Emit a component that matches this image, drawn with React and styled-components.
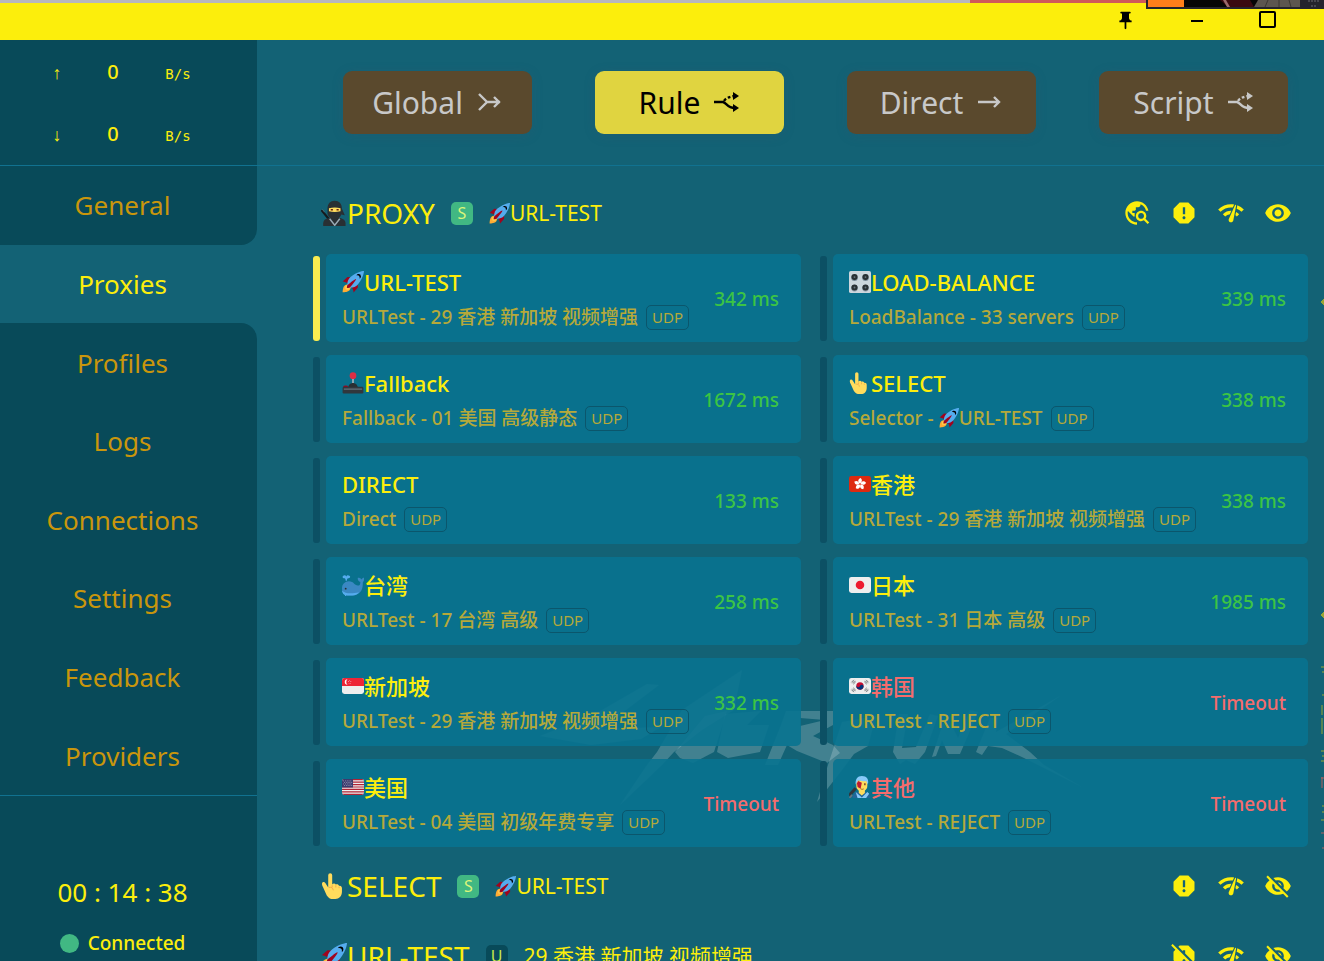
import React from 'react';
import styled, { createGlobalStyle, css } from 'styled-components';
import {
  MdTravelExplore, MdReport, MdReportOff, MdNetworkCheck,
  MdVisibility, MdVisibilityOff, MdPushPin,
} from 'react-icons/md';

const c = {
  yellow: '#fcee0c',
  deep: '#084a59',
  base: '#136275',
  line: '#117290',
  nav: '#c9960c',
  sub: '#b5a93a',
  good: '#3cc444',
  bad: '#f56c6c',
};

const GlobalStyle = createGlobalStyle`
  * { box-sizing: border-box; }
  body {
    margin: 0;
    background: ${c.base};
    color: ${c.yellow};
    font-family: "Noto Sans", "Noto Sans CJK SC", sans-serif;
    overflow: hidden;
  }
  button { font: inherit; color: inherit; border: 0; background: none; padding: 0; cursor: pointer; }
  a { color: inherit; text-decoration: none; }
  h2, p { margin: 0; font-weight: 400; }
`;

const Window = styled.div`
  height: 100vh;
  display: flex;
  flex-direction: column;
`;
const TitleBar = styled.header`
  position: relative;
  flex: none;
  height: 40px;
  padding: 0 21px 0 0;
  border-top: 3px solid #b7b7bd;
  background: ${c.yellow};
  color: #000;
  display: flex;
  justify-content: flex-end;
`;
const WindowButton = styled.button`
  width: 71px;
  height: 34px;
  display: flex;
  align-items: center;
  justify-content: center;
`;
const Backdrop = styled.svg`
  position: absolute;
  top: -3px;
  right: 0;
  display: block;
`;
const Body = styled.div`
  flex: 1;
  min-height: 0;
  display: flex;
`;

const Sidebar = styled.aside`
  flex: none;
  width: 257px;
  display: flex;
  flex-direction: column;
`;
const Traffic = styled.div`
  flex: none;
  height: 126px;
  background: ${c.deep};
  border-bottom: 1px solid ${c.line};
  padding-left: 29px;
  display: grid;
  grid-template-rows: 1fr 1fr;
`;
const TrafficRow = styled.div`
  display: grid;
  grid-template-columns: 56px 56px 74px;
  align-items: baseline;
  align-content: center;
  text-align: center;
  font: 14px "DejaVu Sans Mono", monospace;
`;
const Arrow = styled.span`
  font: 18px "Liberation Mono", monospace;
`;
const Speed = styled.span`
  font: 500 20px "Noto Sans", sans-serif;
`;
const Nav = styled.nav`
  flex: 1;
  display: flex;
  flex-direction: column;
`;
const NavLink = styled.a`
  flex: 1;
  display: flex;
  align-items: center;
  justify-content: center;
  padding-right: 12px;
  font-size: 26px;
  color: ${(p) => (p.$active ? c.yellow : c.nav)};
  background: ${(p) => (p.$active ? 'transparent' : c.deep)};
  border-radius: ${(p) => (p.$edge === 'above' ? '0 0 16px 0' : p.$edge === 'below' ? '0 16px 0 0' : '0')};
`;
const Status = styled.div`
  flex: none;
  height: 166px;
  background: ${c.deep};
  border-top: 1px solid ${c.line};
  padding: 0 12px 4px 0;
  display: flex;
  flex-direction: column;
  align-items: center;
  justify-content: flex-end;
  gap: 19px;
`;
const Timer = styled.p`
  font-size: 26px;
  line-height: 36px;
`;
const Connection = styled.p`
  display: flex;
  align-items: center;
  gap: 9px;
  font-size: 19px;
  font-weight: 500;
  line-height: 28px;
  &::before {
    content: "";
    width: 19px;
    height: 19px;
    border-radius: 50%;
    background: #41b883;
  }
`;

const Main = styled.main`
  position: relative;
  flex: 1;
  min-width: 0;
  overflow: hidden;
`;
const Watermark = styled.svg`
  position: absolute;
  left: 283px;
  top: 630px;
  fill: rgba(255, 255, 255, 0.2);
`;
const EdgeMarks = styled.svg`
  position: absolute;
  right: 0;
  top: 250px;
`;
const Modes = styled.div`
  height: 126px;
  padding: 0 36px 0 86px;
  border-bottom: 1px solid ${c.line};
  display: grid;
  grid-template-columns: repeat(4, 1fr);
  gap: 63px;
  align-items: center;
`;
const ModeButton = styled.button`
  height: 63px;
  border-radius: 9px;
  display: flex;
  align-items: center;
  justify-content: center;
  gap: 14px;
  font-size: 30px;
  line-height: 40px;
  box-shadow: 0 2px 12px rgba(60, 80, 110, 0.2);
  ${(p) => (p.$active
    ? css`background: #e0d440; color: #000;`
    : css`background: #5a492d; color: #c8c8c8;`)}
`;
const List = styled.div`
  position: relative;
  padding: 13px 16px 0 56px;
`;
const GroupHeader = styled.div`
  height: 70px;
  padding: 0 16px 2px 8px;
  display: flex;
  align-items: center;
  gap: 16px;
`;
const GroupName = styled.h2`
  display: flex;
  align-items: center;
  font-size: 28px;
  line-height: 36px;
`;
const Badge = styled.span`
  min-width: 22px;
  height: 23px;
  padding: 0 5px;
  border-radius: 5px;
  background: ${(p) => (p.$dark ? c.deep : '#41b883')};
  color: ${(p) => (p.$dark ? '#c9e84a' : '#dcf57a')};
  font-size: 16px;
  line-height: 23px;
  text-align: center;
`;
const Current = styled.p`
  display: flex;
  align-items: center;
  font-size: 21px;
  line-height: 28px;
`;
const Tools = styled.div`
  margin-left: auto;
  display: flex;
  gap: 19px;
`;
const ToolButton = styled.button`
  display: flex;
  font-size: 28px;
`;
const Grid = styled.div`
  margin: 5px 0;
  display: grid;
  grid-template-columns: 1fr 1fr;
  gap: 13px 19px;
`;
const Proxy = styled.button`
  display: flex;
  align-items: center;
  gap: 6px;
  text-align: left;
  &::before {
    content: "";
    flex: none;
    width: 7px;
    height: 85px;
    border-radius: 3px;
    background: ${(p) => (p.$selected ? '#f9ec50' : '#0c5064')};
  }
`;
const Card = styled.span`
  flex: 1;
  min-width: 0;
  height: 88px;
  border-radius: 5px;
  padding: 2px 22px 0 16px;
  background: rgba(9, 115, 144, 0.9);
  display: flex;
  align-items: center;
  justify-content: space-between;
`;
const Info = styled.span`
  display: flex;
  flex-direction: column;
  gap: 6px;
`;
const Name = styled.span`
  display: flex;
  align-items: center;
  font-size: 22px;
  font-weight: 500;
  line-height: 30px;
  color: ${(p) => (p.$dead ? c.bad : c.yellow)};
`;
const Detail = styled.span`
  display: flex;
  align-items: center;
  font-size: 19px;
  font-weight: 500;
  line-height: 28px;
  white-space: pre;
  color: ${c.sub};
`;
const Tag = styled.span`
  margin-left: 8px;
  height: 25px;
  padding: 0 5px;
  border: 1px solid #0b566c;
  border-radius: 5px;
  font-size: 15px;
  font-weight: 400;
  line-height: 22px;
`;
const Delay = styled.span`
  font-size: 19px;
  font-weight: 500;
  color: ${(p) => (p.$dead ? c.bad : c.good)};
`;
const Glyph = styled.svg`
  flex: none;
  display: block;
`;

const flag = 'M36 27a4 4 0 0 1-4 4H4a4 4 0 0 1-4-4V9a4 4 0 0 1 4-4h28a4 4 0 0 1 4 4v18z';
const petals = [0, 72, 144, 216, 288];

const drawings = {
  rocket: (
    <>
      <path fill="#A0041E" d="M1 17l8-7 16 1 1 16-7 8s0-6-6-12-12-6-12-6z" />
      <path fill="#FFAC33" d="M1 35s0-8 3-11 11-2.800 11-2.800S15 29 12 32 1 35 1 35z" />
      <circle fill="#FFCC4D" cx="9" cy="27" r="4" />
      <path fill="#55ACEE" d="M36 0S26 0 14 10c-6 5-6 14-4 16s11 2 16-4C36 10 36 0 36 0z" />
      <path fill="#000" d="M27 5c-1.600 0-3 1-3.600 2.400.5-.2 1-.4 1.600-.4a4 4 0 0 1 4 4c0 .6-.1 1.100-.4 1.600C30 12 31 10.600 31 9a4 4 0 0 0-4-4z" />
      <path fill="#A0041E" d="M8 28s0-4 1-5 13-11 14-10-9 13-10 14-5 1-5 1z" />
    </>
  ),
  ninja: (
    <>
      <path stroke="#141a1e" strokeWidth="3" strokeLinecap="round" d="M1.500 15l9 11" />
      <path stroke="#66757F" strokeWidth="1" d="M2 13l3 4" />
      <path fill="#292F33" d="M3 36v-3c0-5 4-8 9-8h13c5 0 9 3 9 8v3z" />
      <path fill="#292F33" d="M9 12C9 5 13 1 19 1s10 4 10 11l4 9-5-1c-1 4-5 7-9 7s-9-3-10-8z" />
      <path fill="#FFDC5D" d="M11 11.500c5-1.500 11-1.500 16 0v4c-5 1.500-11 1.500-16 0z" />
      <path fill="#662113" d="M13.500 12.500h3v2h-3zM21.500 12.500h3v2h-3z" />
      <path fill="none" stroke="#99AAB5" strokeWidth="2" d="M12 26l7 9 7-9" />
    </>
  ),
  joystick: (
    <>
      <path fill="#99AAB5" d="M16.500 7h3v16h-3z" />
      <circle fill="#DD2E44" cx="18" cy="6" r="5.500" />
      <ellipse fill="#A0041E" cx="6" cy="24" rx="4" ry="2" />
      <path fill="#292F33" d="M10 25c2-6 5-7 8-7s6 1 8 7z" />
      <rect fill="#31373D" x="1" y="24" width="34" height="11" rx="2" />
      <path fill="#66757F" d="M3 27h30v2H3z" />
    </>
  ),
  knobs: (
    <>
      <rect fill="#CCD6DD" width="36" height="36" rx="3" />
      {[[9, 10], [27, 10], [9, 27], [27, 27]].map(([x, y]) => (
        <g key={`${x}-${y}`}>
          <circle fill="#8899A6" cx={x} cy={y + 1} r="5.500" />
          <circle fill="#292F33" cx={x} cy={y} r="5" />
          <circle fill="#66757F" cx={x} cy={y} r="1.500" />
        </g>
      ))}
    </>
  ),
  finger: (
    <>
      <path fill="#FFDC5D" d="M10 3a2.500 2.500 0 0 1 5.500 0v13c1-2 4-2 5 0 2-1 4 0 4.500 2 2-1 4 1 4 3v5c0 6-4 10-9 10h-3c-4 0-6-1-9-5L3 20c-2-4-2-6-1-7s3-1 4 1l4 6z" />
      <path fill="none" stroke="#EF9645" strokeWidth="1" d="M15.500 17v3M20.500 17v3M25 19v2M11 20c3-1 6 1 6 4" />
    </>
  ),
  whale: (
    <>
      <path fill="#55ACEE" d="M2 3c2-2 4-1 5 1 1-2 3-3 5-1 2 0 2 4-1 4-2 0-3 1-3 4H6c0-3-1-4-3-4S0 4 2 3z" />
      <path fill="#3B88C3" d="M0 23c0-6 5-11 11-11 9 0 9 7 15 7 3 0 4-2 4-6-3-1-5-4-4-7 3 0 5 1 6 3 1-2 2-3 4-3 1 4-1 6-2 8 1 13-6 21-16 21H8c-5 0-8-4-8-12z" />
      <path fill="#55ACEE" d="M0 27c5 5 14 6 28 3-3 4-7 5-11 5H8c-4 0-7-2-8-8z" />
      <circle fill="#292F33" cx="6" cy="24" r="1.500" />
    </>
  ),
  hk: (
    <>
      <path fill="#DE2910" d={flag} />
      {petals.map((a) => (
        <path key={a} fill="#fff" transform={`rotate(${a} 18 18)`} d="M18 17c-4-2-4-7 1-9 3 3 3 6-1 9z" />
      ))}
    </>
  ),
  jp: (
    <>
      <path fill="#EEE" d={flag} />
      <circle fill="#ED1B2F" cx="18" cy="18" r="7" />
    </>
  ),
  sg: (
    <>
      <path fill="#EEE" d={flag} />
      <path fill="#EE2536" d="M32 5H4a4 4 0 0 0-4 4v9h36V9a4 4 0 0 0-4-4z" />
      <path fill="#fff" d="M9 7a4.500 4.500 0 1 0 0 9 6 6 0 0 1 0-9z" />
      <path fill="#fff" d="M12 8h1v1h-1zM10 10h1v1h-1zM14 10h1v1h-1zM11 13h1v1h-1zM13 13h1v1h-1z" />
    </>
  ),
  us: (
    <>
      <path fill="#EEE" d={flag} />
      <path fill="#B22334" d="M4 5h28c2 0 3 1 3.500 2H.5C1 6 2 5 4 5zM0 9h36v2H0zM0 13h36v2H0zM0 17h36v2H0zM0 21h36v2H0zM0 25h36v2H0zM.5 29h35c-.5 1-1.500 2-3.500 2H4c-2 0-3-1-3.500-2z" />
      <path fill="#3C3B6E" d="M4 5h14v14H0V9a4 4 0 0 1 4-4z" />
      <path stroke="#fff" strokeWidth="1" strokeDasharray="1 2" d="M2 8h15M3.500 10.500h13M2 13h15M3.500 15.500h13" />
    </>
  ),
  kr: (
    <>
      <path fill="#EEE" d={flag} />
      <circle fill="#C60C30" cx="18" cy="18" r="6" />
      <path fill="#003478" d="M12.500 15.500a3 3 0 0 0 5.500 2.500 3 3 0 0 1 5.700 2A6 6 0 1 1 12.500 15.500z" />
      <path stroke="#292F33" strokeWidth="1" d="M4 12l4-4M5.500 13.500l4-4M7 15l4-4M28 8l4 4M26.500 9.500l4 4M25 11l4 4M4 24l4 4M5.500 22.500l4 4M7 21l4 4M32 24l-4 4M30.500 22.500l-4 4M29 21l-4 4" />
    </>
  ),
  singer: (
    <>
      <path fill="#269" d="M6 36c0-7 4-10 9-10h11c6 0 9 4 9 10z" />
      <path fill="#88C9F9" d="M11 26l10 9 9-9 3 3-5 7H14z" />
      <path fill="#FFDC5D" d="M16 20h10v8l-5 4-5-4z" />
      <path fill="#FFDC5D" d="M12 7h18v9c0 6-4 9-9 9s-9-3-9-9z" />
      <path fill="#88C9F9" d="M11 14C10 5 14 0 21 0c8 0 12 5 10 14l-3-6c-5 1-10 0-13-1z" />
      <path fill="#BE1931" d="M15 8l6 3-1 5-1 5-5-3-1-6z" />
      <path fill="#662113" d="M25 12h2v3h-2z" />
      <path fill="none" stroke="#662113" strokeWidth="1" d="M19 21c2 1 4 1 5 0" />
      <path stroke="#31373D" strokeWidth="5" d="M0 32l11-12" />
      <path stroke="#66757F" strokeWidth="3" d="M1 36l4-5" />
    </>
  ),
};

function Emoji({ name, size = 22 }) {
  return <Glyph width={size} height={size} viewBox="0 0 36 36" fill="none" aria-hidden="true">{drawings[name]}</Glyph>;
}

const modeIcons = {
  merge: <path d="M2 3l8 8-8 8M10 11h13M17 6l5 5-5 5" />,
  arrow: <path d="M1 11h21M17 6l5 5-5 5" />,
  fork: (
    <>
      <path d="M0 11h9c4 1 4 6 12 6" />
      <path d="M10 10c2-3 5-4 10-5" strokeDasharray="3 2" />
      <path fill="currentColor" stroke="none" d="M19 1l6 4-6 4zM19 13l6 4-6 4z" />
    </>
  ),
};
function ModeIcon({ name }) {
  return (
    <Glyph width="26" height="24" viewBox="0 0 26 24" fill="none" stroke="currentColor" strokeWidth="2.4" aria-hidden="true">
      {modeIcons[name]}
    </Glyph>
  );
}

const modes = [
  ['Global', 'merge'], ['Rule', 'fork'], ['Direct', 'arrow'], ['Script', 'fork'],
];
const pages = ['General', 'Proxies', 'Profiles', 'Logs', 'Connections', 'Settings', 'Feedback', 'Providers'];
const currentPage = 1;

const proxies = [
  { icon: 'rocket', name: 'URL-TEST', detail: 'URLTest - 29 香港 新加坡 视频增强', delay: '342 ms', selected: true },
  { icon: 'knobs', name: 'LOAD-BALANCE', detail: 'LoadBalance - 33 servers', delay: '339 ms' },
  { icon: 'joystick', name: 'Fallback', detail: 'Fallback - 01 美国 高级静态', delay: '1672 ms' },
  { icon: 'finger', name: 'SELECT', detail: 'Selector - ', via: 'URL-TEST', delay: '338 ms' },
  { name: 'DIRECT', detail: 'Direct', delay: '133 ms' },
  { icon: 'hk', name: '香港', detail: 'URLTest - 29 香港 新加坡 视频增强', delay: '338 ms' },
  { icon: 'whale', name: '台湾', detail: 'URLTest - 17 台湾 高级', delay: '258 ms' },
  { icon: 'jp', name: '日本', detail: 'URLTest - 31 日本 高级', delay: '1985 ms' },
  { icon: 'sg', name: '新加坡', detail: 'URLTest - 29 香港 新加坡 视频增强', delay: '332 ms' },
  { icon: 'kr', name: '韩国', detail: 'URLTest - REJECT', delay: 'Timeout', dead: true },
  { icon: 'us', name: '美国', detail: 'URLTest - 04 美国 初级年费专享', delay: 'Timeout' },
  { icon: 'singer', name: '其他', detail: 'URLTest - REJECT', delay: 'Timeout', dead: true },
];

function ProxyItem({ item }) {
  return (
    <Proxy type="button" $selected={item.selected}>
      <Card>
        <Info>
          <Name $dead={item.dead}>
            {item.icon && <Emoji name={item.icon} />}
            {item.name}
          </Name>
          <Detail>
            {item.detail}
            {item.via && <><Emoji name="rocket" size={20} />{item.via}</>}
            <Tag>UDP</Tag>
          </Detail>
        </Info>
        <Delay $dead={item.delay === 'Timeout'}>{item.delay}</Delay>
      </Card>
    </Proxy>
  );
}

function Group({ icon, name, badge, dark, current, currentIcon, tools, children }) {
  return (
    <section>
      <GroupHeader>
        <GroupName><Emoji name={icon} size={26} />{name}</GroupName>
        <Badge $dark={dark}>{badge}</Badge>
        <Current>{currentIcon && <Emoji name={currentIcon} size={21} />}{current}</Current>
        <Tools>
          {tools.map(([label, Icon]) => (
            <ToolButton key={label} type="button" aria-label={label}><Icon /></ToolButton>
          ))}
        </Tools>
      </GroupHeader>
      {children}
    </section>
  );
}

export default function App() {
  return (
    <Window>
      <GlobalStyle />
      <TitleBar>
        <Backdrop width="354" height="9" aria-hidden="true">
          <path fill="#cf5a5a" d="M0 0h176v3H0z" />
          <path fill="#24242c" d="M176 0h178v9H176z" />
          <path fill="#ff7f1a" d="M178 0h36v7h-36z" />
          <path fill="#060505" d="M214 0h116v7H214z" />
          <path fill="#3a0a10" d="M250 0h30l4 7h-26z" />
          <path fill="#9b6a6c" d="M253 0h3l4 7h-3z" />
          <path fill="#5c564f" d="M288 0h42v7h-46z" />
          <path stroke="#3b3733" d="M298 0l-3 7M309 0v7M319 0l2 7" />
          <path stroke="#6b6b72" strokeDasharray="2 1" d="M338 1h12M341 6h6" />
        </Backdrop>
        <WindowButton type="button" aria-label="Pin"><MdPushPin size={21} /></WindowButton>
        <WindowButton type="button" aria-label="Minimize">
          <svg width="12" height="12"><path stroke="#000" strokeWidth="2" d="M0 7h12" /></svg>
        </WindowButton>
        <WindowButton type="button" aria-label="Maximize">
          <svg width="18" height="18"><rect x="1" y="1" width="15" height="15" rx="1" fill="none" stroke="#000" strokeWidth="2" /></svg>
        </WindowButton>
      </TitleBar>
      <Body>
        <Sidebar>
          <Traffic>
            <TrafficRow><Arrow>↑</Arrow><Speed>0</Speed><span>B/s</span></TrafficRow>
            <TrafficRow><Arrow>↓</Arrow><Speed>0</Speed><span>B/s</span></TrafficRow>
          </Traffic>
          <Nav>
            {pages.map((page, i) => (
              <NavLink
                key={page}
                href={`#${page.toLowerCase()}`}
                $active={i === currentPage}
                $edge={i === currentPage - 1 ? 'above' : i === currentPage + 1 ? 'below' : undefined}
              >
                {page}
              </NavLink>
            ))}
          </Nav>
          <Status>
            <Timer>00 : 14 : 38</Timer>
            <Connection>Connected</Connection>
          </Status>
        </Sidebar>
        <Main>
          <Watermark width="560" height="150" viewBox="540 670 560 150" fillRule="evenodd" aria-hidden="true">
            <path d="M540 736l55-22 52-30 12 1-58 44 60-2-20 12-50 6z" />
            <path d="M742 670l-8 40-32 20-28 22-12 13-42 40 27-40 10-13 25-42z" />
            <path d="M675 752l30-36 22-5-13 41-21 11-13-5z" />
            <path d="M717 752l8-38 36-3-14 14 22 0-9 27-32 6z" />
            <path d="M786 711h47v14l-20 11 20 9 7 8-13 10-30-12-10-6-9 20h-13l16-40zM800 718l25 2-25 6z" />
            <path d="M842 722l34-6-8 30-14 8-15 20-22 28 10-34z" />
            <path d="M893 752l6-38 9 0-6 34 14-1 14-33 8 2-13 36-10 12-9-4-6 4z" />
            <path d="M932 757l14-43 12 24 12-28 8 2-18 42-12 0-6-14-6 16z" />
            <path d="M976 752l14-34 8 0-2 14 64-36-54 38 24 18 14 13 38 22-58-29-22-10-14-2-6 9z" />
          </Watermark>
          <EdgeMarks width="3" height="570" fill="none" stroke="#9aa634" aria-hidden="true">
            <path fill="#9aa634" d="M3 9l-3 3 3 3zM3 322l-3 3 3 3z" />
            <path d="M0 377h3M1 382h2M1 405h2M1 415v10M1 428v16M0 461h3M1 466h2M0 471h3M1 516h2M1 522h2M0 530h3" />
            <path stroke="#b0605f" d="M1 487v11M0 488h3M0 543h3M1 558h2" />
          </EdgeMarks>
          <Modes>
            {modes.map(([label, icon]) => (
              <ModeButton key={label} type="button" $active={label === 'Rule'}>
                {label}<ModeIcon name={icon} />
              </ModeButton>
            ))}
          </Modes>
          <List>
            <Group
              icon="ninja" name="PROXY" badge="S" currentIcon="rocket" current="URL-TEST"
              tools={[['Locate', MdTravelExplore], ['Hide timeouts', MdReport], ['Test latency', MdNetworkCheck], ['Collapse', MdVisibility]]}
            >
              <Grid>{proxies.map((item) => <ProxyItem key={item.name} item={item} />)}</Grid>
            </Group>
            <Group
              icon="finger" name="SELECT" badge="S" currentIcon="rocket" current="URL-TEST"
              tools={[['Hide timeouts', MdReport], ['Test latency', MdNetworkCheck], ['Expand', MdVisibilityOff]]}
            />
            <Group
              icon="rocket" name="URL-TEST" badge="U" dark current="29 香港 新加坡 视频增强"
              tools={[['Show timeouts', MdReportOff], ['Test latency', MdNetworkCheck], ['Expand', MdVisibilityOff]]}
            />
          </List>
        </Main>
      </Body>
    </Window>
  );
}
